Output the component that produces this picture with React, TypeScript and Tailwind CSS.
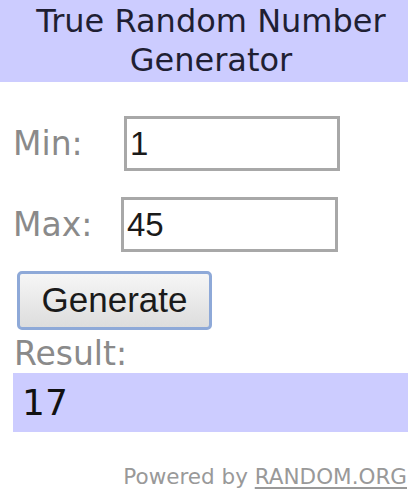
export default function App() {
  return (
    <main className="w-[410px] h-[500px] bg-white overflow-hidden">
      <div className="w-[408px] font-['DejaVu_Sans',Verdana,sans-serif]">
        <header className="h-[82px] bg-[#ccccff] flex flex-col items-center justify-center pl-[14px]">
          <h1 className="text-[32px] leading-[39px] text-[#1f1f33] text-center">
            True Random Number
            <br />
            Generator
          </h1>
        </header>

        <div className="pl-[13px] pt-[34px]">
          <div className="flex items-center h-[55px]">
            <span className="w-[111px] text-[33px] text-[#8a8a8a]">Min:</span>
            <div className="w-[216px] h-[55px] border-[3px] border-[#a8a8a8] flex items-center pl-[3px] font-['Liberation_Sans',Arial,sans-serif] text-[33px] text-[#1a1a1a]">
              1
            </div>
          </div>

          <div className="flex items-center h-[55px] mt-[26px]">
            <span className="w-[108px] text-[33px] text-[#8a8a8a]">Max:</span>
            <div className="w-[217px] h-[55px] border-[3px] border-[#a8a8a8] flex items-center pl-[3px] font-['Liberation_Sans',Arial,sans-serif] text-[33px] text-[#1a1a1a]">
              45
            </div>
          </div>

          <button className="mt-[19px] ml-[4px] w-[195px] h-[59px] rounded-[5px] border-[3px] border-[#8ea9d8] bg-gradient-to-b from-[#f6f6f6] to-[#dddddd] font-['Liberation_Sans',Arial,sans-serif] text-[35px] text-[#1a1a1a] flex items-center justify-center">
            Generate
          </button>

          <div className="mt-[6px] text-[33px] leading-[36px] text-[#8a8a8a] pl-[1px]">Result:</div>

          <div className="mt-[1px] h-[59px] bg-[#ccccff] flex items-center pl-[9px] text-[36px] text-[#111]">
            17
          </div>

          <div className="mt-[32px] text-right text-[21.5px] leading-[26px] text-[#999999] pr-[1px]">
            Powered by <span className="underline underline-offset-[3px]">RANDOM.ORG</span>
          </div>
        </div>
      </div>
    </main>
  );
}
